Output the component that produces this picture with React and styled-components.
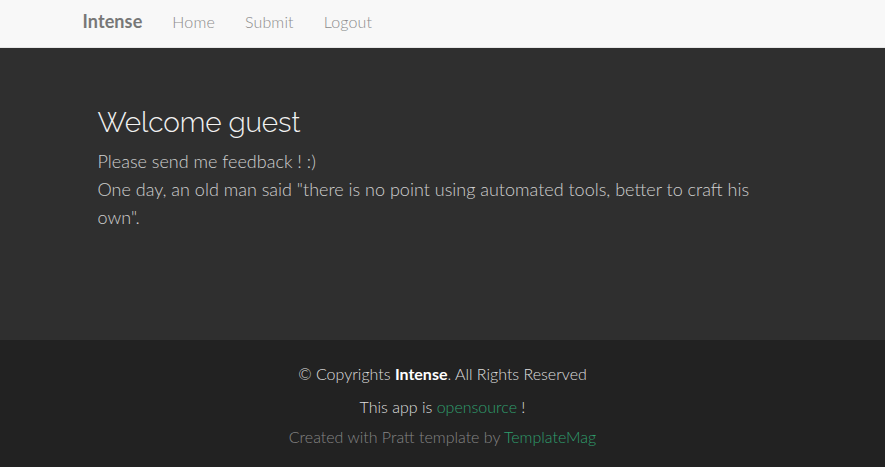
import React from 'react';
import styled, { createGlobalStyle } from 'styled-components';

const GlobalStyle = createGlobalStyle`
    html, body {
        margin: 0;
        padding: 0;
        background: #222222;
    }
    body {
        font-family: Lato, "Open Sans", sans-serif;
    }
`

const Navbar = styled.nav`
    height: 48px;
    background: #f8f8f8;
    border-bottom: 1px solid #e7e7e7;
    box-sizing: border-box;
`

const Container = styled.div`
    width: 750px;
    margin: 0 auto;
    padding: 0 15px;
    box-sizing: border-box;
    display: flex;
    align-items: center;
    height: 100%;
`

const Brand = styled.a`
    font-size: 18px;
    font-weight: 700;
    color: #777;
    padding: 0 15px 0 0;
    margin-top: -5px;
    letter-spacing: 0.1px;
`

const NavLink = styled.a`
    font-size: 16px;
    font-weight: 300;
    color: #8c8c8c;
    padding: 0 15px;
    margin-top: -4px;
    letter-spacing: 0.15px;
`

const Hero = styled.section`
    background: #2f2f2f;
    height: 292px;
`

const HeroInner = styled.div`
    width: 750px;
    margin: 0 auto;
    padding: 58px 30px 0;
    box-sizing: border-box;
`

const Title = styled.h1`
    font-family: Raleway, Lato, sans-serif;
    font-weight: 300;
    font-size: 28px;
    color: #f2f2f2;
    margin: 0 0 7px;
    line-height: 34px;
    letter-spacing: -0.1px;
`

const Text = styled.p`
    font-size: 18px;
    font-weight: 300;
    line-height: 28px;
    color: #cfcfcf;
    margin: 0;
`

const Footer = styled.footer`
    background: #222222;
    height: 127px;
    text-align: center;
    padding-top: 23px;
    box-sizing: border-box;
`

const FooterLine = styled.p`
    font-size: 16px;
    font-weight: 300;
    margin: 0 0 ${props => props.tight ? '8px' : '11px'};
    line-height: 22px;
    color: ${props => props.muted ? '#858585' : '#dedede'};
`

const Strong = styled.b`
    font-weight: 700;
    color: #fff;
`

const GreenLink = styled.a`
    color: #2f9e6d;
`

const App = () => {
    return (
        <>
            <GlobalStyle />
            <Navbar>
                <Container>
                    <Brand>Intense</Brand>
                    <NavLink>Home</NavLink>
                    <NavLink>Submit</NavLink>
                    <NavLink>Logout</NavLink>
                </Container>
            </Navbar>
            <Hero>
                <HeroInner>
                    <Title>Welcome guest</Title>
                    <Text>Please send me feedback ! :)</Text>
                    <Text>One day, an old man said "there is no point using automated tools, better to craft his own".</Text>
                </HeroInner>
            </Hero>
            <Footer>
                <FooterLine>© Copyrights <Strong>Intense</Strong>. All Rights Reserved</FooterLine>
                <FooterLine tight>This app is <GreenLink>opensource</GreenLink> !</FooterLine>
                <FooterLine muted>Created with Pratt template by <GreenLink>TemplateMag</GreenLink></FooterLine>
            </Footer>
        </>
    )
}

export default App;
